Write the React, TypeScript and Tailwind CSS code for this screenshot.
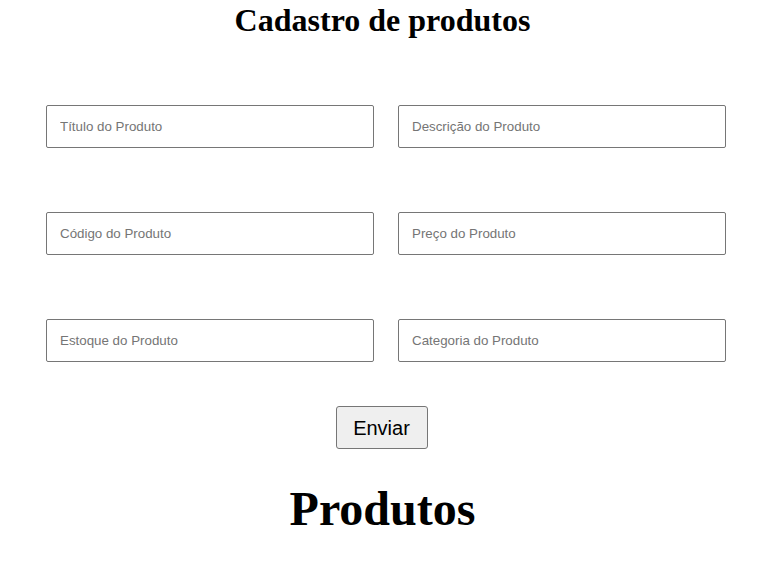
const campos = [
  "Título do Produto",
  "Descrição do Produto",
  "Código do Produto",
  "Preço do Produto",
  "Estoque do Produto",
  "Categoria do Produto",
];

export default function App() {
  return (
    <div className="w-[775px] h-[564px] bg-white overflow-hidden">
      <div className="w-[765px] flex flex-col items-center">
        {/* Title */}
        <h1 className="mt-[2px] text-[32px] leading-[37px] font-bold text-black font-['Liberation_Serif',serif]">
          Cadastro de produtos
        </h1>

        {/* Form */}
        <form className="w-full mt-[66px]" onSubmit={(e) => e.preventDefault()}>
          <div className="grid grid-cols-[328px_328px] gap-x-[24px] gap-y-[64px] pl-[46px]">
            {campos.map((c) => (
              <input
                key={c}
                type="text"
                placeholder={c}
                className="h-[43px] border border-[#767676] rounded-[2px] px-[13px] text-[13.333px] font-['Liberation_Sans',Arial,sans-serif] text-black placeholder:text-[#757575] outline-none"
              />
            ))}
          </div>
          <div className="flex justify-center mt-[44px] pr-[2px]">
            <button
              type="submit"
              className="w-[92px] h-[43px] bg-[#efefef] border border-[#767676] rounded-[3px] text-[20px] text-black font-['Liberation_Sans',Arial,sans-serif]"
            >
              Enviar
            </button>
          </div>
        </form>

        {/* Lista */}
        <h1 className="mt-[32px] text-[48px] leading-[56px] font-bold text-black font-['Liberation_Serif',serif]">
          Produtos
        </h1>
      </div>
    </div>
  );
}
